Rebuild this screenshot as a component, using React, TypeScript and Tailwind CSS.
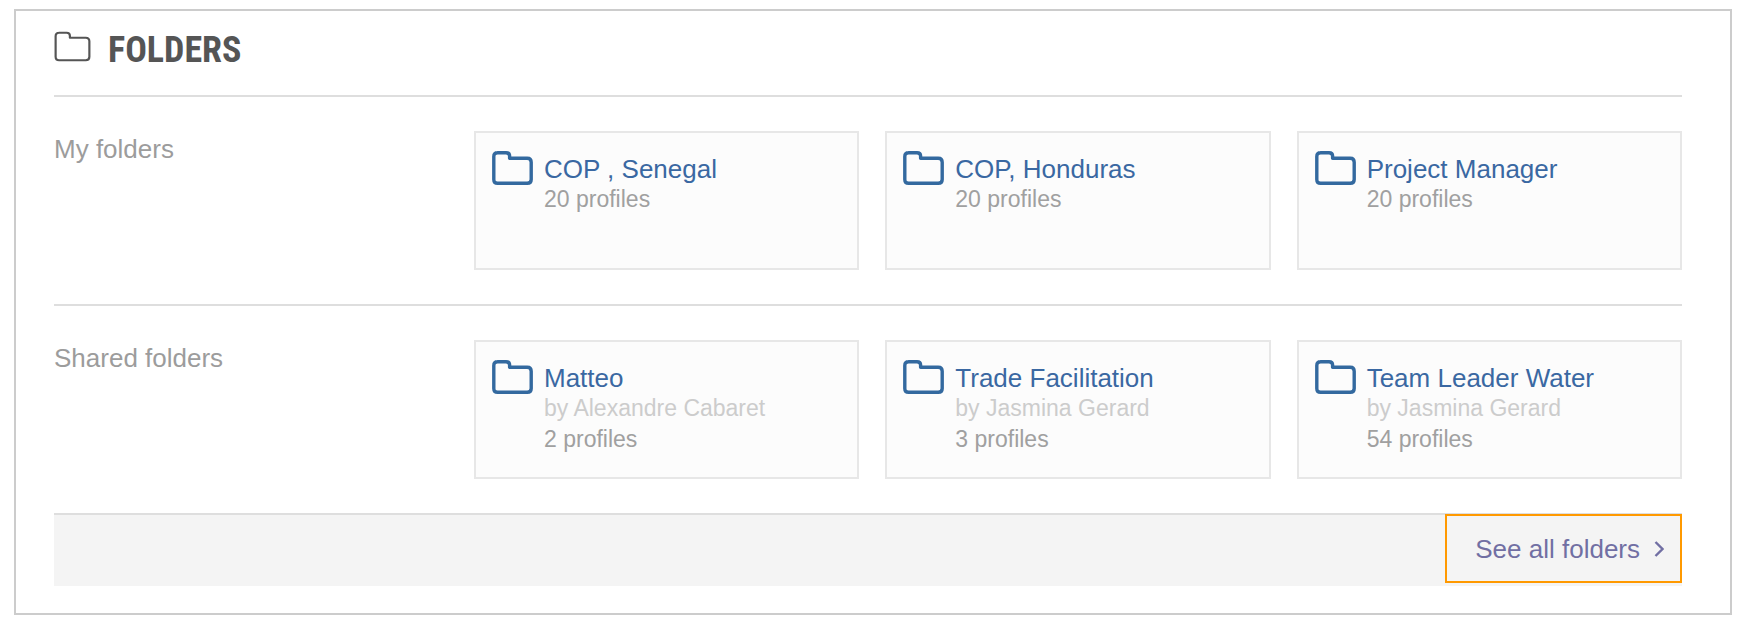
interface Folder {
  name: string;
  owner?: string;
  profiles: number;
}

interface Section {
  title: string;
  folders: Folder[];
}

const sections: Section[] = [
  {
    title: 'My folders',
    folders: [
      { name: 'COP , Senegal', profiles: 20 },
      { name: 'COP, Honduras', profiles: 20 },
      { name: 'Project Manager', profiles: 20 },
    ],
  },
  {
    title: 'Shared folders',
    folders: [
      { name: 'Matteo', owner: 'Alexandre Cabaret', profiles: 2 },
      { name: 'Trade Facilitation', owner: 'Jasmina Gerard', profiles: 3 },
      { name: 'Team Leader Water', owner: 'Jasmina Gerard', profiles: 54 },
    ],
  },
];

function FolderIcon({ className, stroke }: { className: string; stroke: number }) {
  return (
    <svg viewBox="0 0 41 34" fill="none" className={className} aria-hidden="true">
      <path
        d="M5.5 1.8H14C16.6 1.8 17.6 3 17.6 5V7.3H35.2Q39.2 7.3 39.2 11.3V28.4Q39.2 32.2 35.2 32.2H5.6Q1.8 32.2 1.8 28.4V5.6Q1.8 1.8 5.6 1.8Z"
        stroke="currentColor"
        strokeWidth={stroke}
        strokeLinejoin="round"
      />
    </svg>
  );
}

function FolderCard({ folder }: { folder: Folder }) {
  return (
    <li className="flex h-[139px] items-start gap-[11px] border-2 border-[#e7e7e7] bg-[#fcfcfc] px-4 pt-[18px]">
      <FolderIcon className="h-[34px] w-[41px] shrink-0 text-[#33699f]" stroke={3.4} />
      <div className="min-w-0 pt-[3px]">
        <a href="#" className="block text-[26px] leading-[30px] text-[#3a68a2]">
          {folder.name}
        </a>
        {folder.owner && (
          <p className="text-[23px] leading-[31px] text-[#cccccc]">by {folder.owner}</p>
        )}
        <p className="text-[23px] leading-[31px] text-[#a0a0a0]">{folder.profiles} profiles</p>
      </div>
    </li>
  );
}

export default function App() {
  return (
    <main className="bg-white pt-[9px] pr-[21px] pb-3 pl-[14px] font-['Liberation_Sans',Arial,sans-serif]">
      <div className="border-2 border-[#cccccc] pr-12 pb-[27px] pl-[38px]">
        <header className="flex h-[84px] items-start gap-[17px] pt-5 text-[#555555]">
          <FolderIcon className="h-[31px] w-[37px]" stroke={2.4} />
          <h1 className="font-['Liberation_Sans_Narrow','Roboto_Condensed','Open_Sans_Condensed','DejaVu_Sans_Condensed',sans-serif] text-[36px] leading-[38px] font-bold">
            FOLDERS
          </h1>
        </header>

        {sections.map((section) => (
          <section key={section.title} className="flex border-t-2 border-[#dedede] py-[34px]">
            <h2 className="w-[420px] shrink-0 pt-[3px] text-[26px] leading-[30px] text-[#9c9c9c]">
              {section.title}
            </h2>
            <ul className="grid flex-1 grid-cols-3 gap-[26px]">
              {section.folders.map((folder) => (
                <FolderCard key={folder.name} folder={folder} />
              ))}
            </ul>
          </section>
        ))}

        <footer className="flex h-[73px] items-start justify-end border-t-2 border-[#dedede] bg-[#f4f4f4]">
          <a
            href="#"
            className="-mt-px flex h-[69px] items-center gap-[14px] border-2 border-[#ff9900] pr-4 pl-7 text-[26px] leading-[30px] text-[#716fa3]"
          >
            See all folders
            <svg viewBox="0 0 10 16" fill="none" className="h-4 w-[10px]" aria-hidden="true">
              <path d="M1.5 1L8.5 8L1.5 15" stroke="currentColor" strokeWidth="2.4" />
            </svg>
          </a>
        </footer>
      </div>
    </main>
  );
}
